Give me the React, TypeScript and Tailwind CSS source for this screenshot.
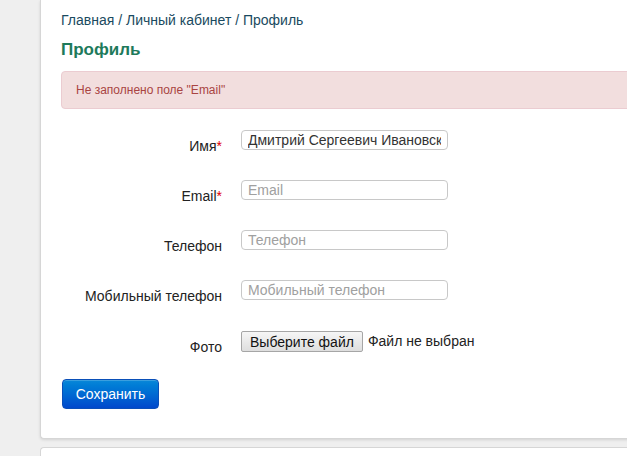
export default function App() {
  const rows: { label: string; required?: boolean; value?: string; placeholder: string }[] = [
    { label: "Имя", required: true, value: "Дмитрий Сергеевич Ивановский", placeholder: "Имя" },
    { label: "Email", required: true, placeholder: "Email" },
    { label: "Телефон", placeholder: "Телефон" },
    { label: "Мобильный телефон", placeholder: "Мобильный телефон" },
  ];

  return (
    <div className="h-[456px] w-[627px] overflow-hidden bg-[#efefef] pl-[40px] font-['Liberation_Sans',Arial,sans-serif] text-[14px] text-[#333]">
      <div className="h-[439px] w-[620px] rounded-bl-[4px] border-b border-l border-[#d6d6d6] bg-white pl-[20px] pt-[11px] shadow-[0_1px_3px_rgba(0,0,0,0.12)]">
        <div className="text-[14px] leading-[18px] text-[#1a4a60]">
          <span>Главная</span> / <span>Личный кабинет</span> / <span>Профиль</span>
        </div>
        <h1 className="mt-[10px] text-[17px] font-bold leading-[22px] text-[#1e7a5b]">Профиль</h1>
        <div className="mt-[10px] flex h-[38px] items-center rounded-[4px] border border-[#ebccd1] bg-[#f2dede] pl-[14px] text-[12px] text-[#a94442]">
          Не заполнено поле "Email"
        </div>
        <div className="mt-[21px]">
          {rows.map((r) => (
            <div key={r.label} className="flex h-[50px] items-start">
              <label className="w-[161px] pt-[6px] text-right leading-[20px] text-[#222]">
                {r.label}
                {r.required && <span className="text-[#e00000]">*</span>}
              </label>
              <input
                readOnly
                defaultValue={r.value}
                placeholder={r.placeholder}
                className="ml-[19px] h-[20px] w-[207px] rounded-[4px] border border-[#c8c8c8] px-[6px] text-[14px] text-[#333] placeholder:text-[#a0a0a0] outline-none"
              />
            </div>
          ))}
          <div className="flex h-[49px] items-start pt-[1px]">
            <label className="w-[161px] pt-[6px] text-right leading-[20px] text-[#222]">Фото</label>
            <div className="ml-[19px] flex items-center">
              <button className="h-[21px] rounded-[2px] border border-[#a6a6a6] bg-gradient-to-b from-[#f6f6f6] to-[#dedede] px-[8px] text-[14px] leading-[18px] text-[#111]">
                Выберите файл
              </button>
              <span className="ml-[5px] text-[14px] text-[#222]">Файл не выбран</span>
            </div>
          </div>
          <button className="ml-[1px] h-[30px] w-[97px] rounded-[4px] border border-[#0a4fb8] bg-gradient-to-b from-[#0a88d8] to-[#0148cc] text-[14px] text-white shadow-[inset_0_1px_0_rgba(255,255,255,0.2)]">
            Сохранить
          </button>
        </div>
      </div>
      <div className="mt-[8px] h-[20px] w-[620px] rounded-tl-[4px] border-l border-t border-[#d6d6d6] bg-white" />
    </div>
  );
}
